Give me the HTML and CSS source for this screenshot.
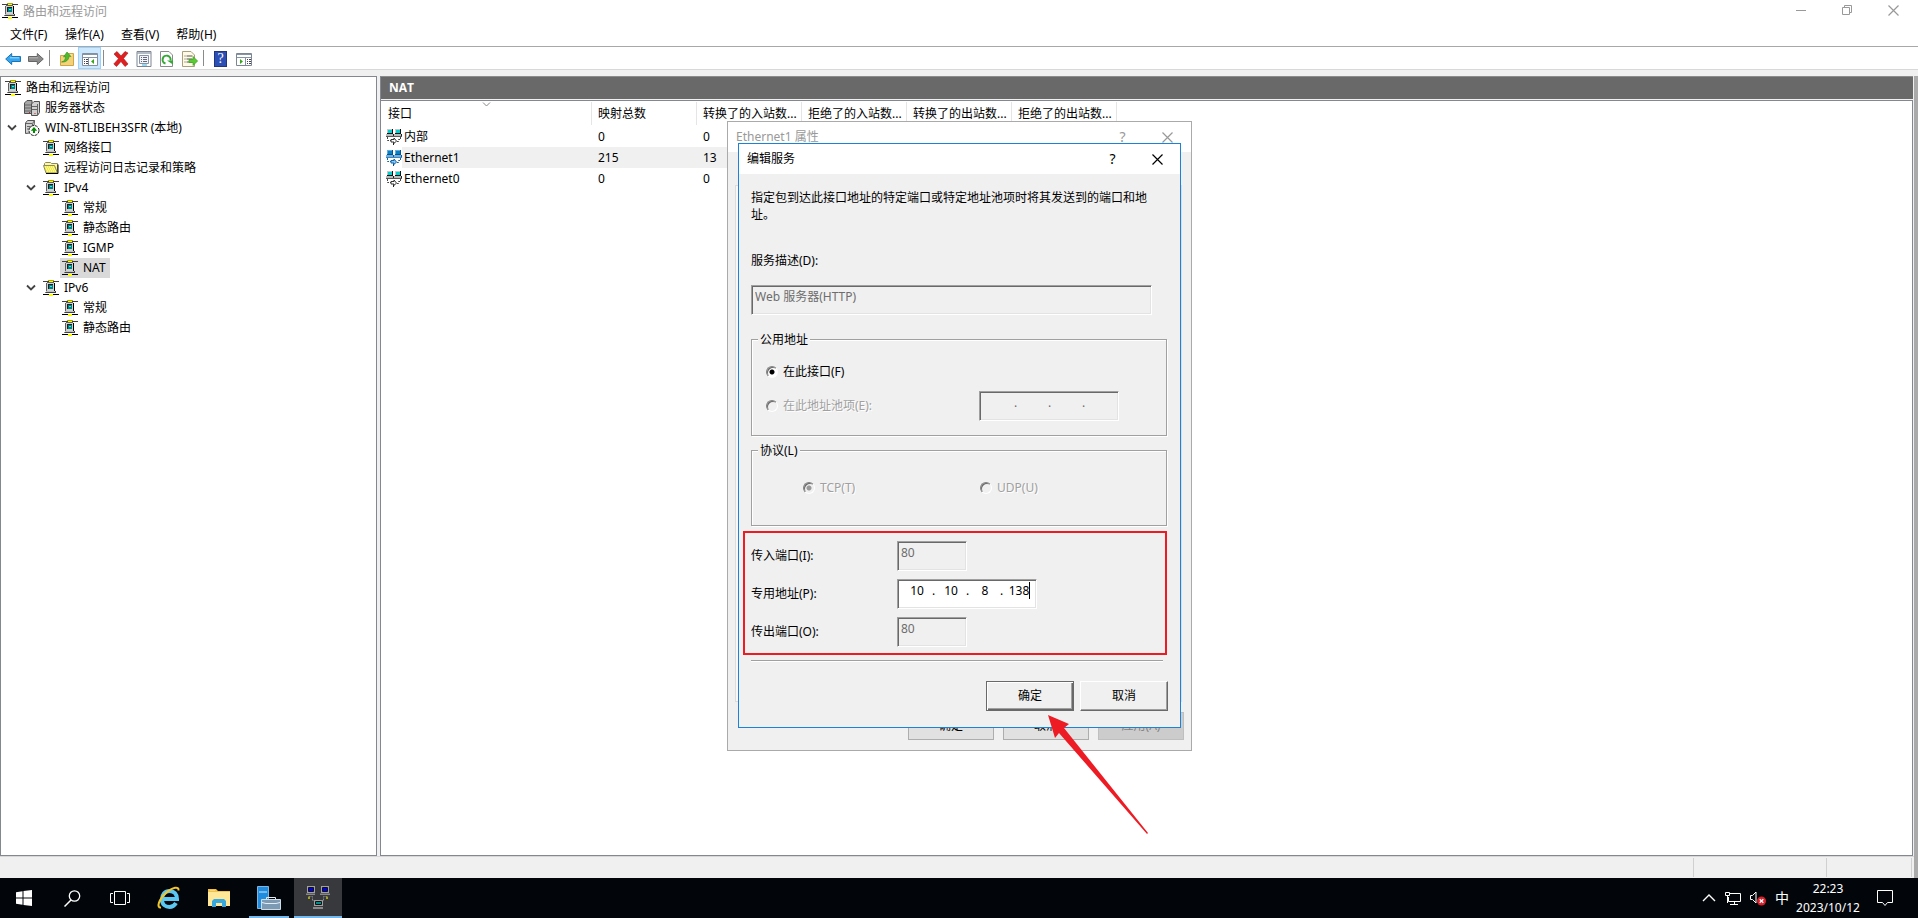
FILE: index.html
```html
<!DOCTYPE html>
<html lang="zh-CN">
<head>
<meta charset="utf-8">
<title>路由和远程访问</title>
<link rel="stylesheet" href="styles.css">
</head>
<body>
<svg class="defs" aria-hidden="true">
  <symbol id="i-rras" viewBox="0 0 16 16">
    <g shape-rendering="crispEdges">
      <path fill="#404040" d="M0 1h16v1H0z"/><path fill="#000" d="M0 14h6v1H0zM10 14h6v1h-6z"/>
      <path fill="#a8a800" d="M5 0h6v1H5z"/><path fill="#ffff00" d="M6 1h4v1H6zM6 14h4v2H6z"/>
      <path fill="#606060" d="M4 2h7v1H4zM3 3h1v8H3z"/>
      <path fill="#d0d0d0" d="M4 3h7v8H4z"/>
      <path fill="#000" d="M11 3h1v8h-1z"/><path fill="#202020" d="M5 4h5v5H5z"/><path fill="#008080" d="M6 5h4v4H6z"/><path fill="#00ffff" d="M7 6h2v1H7z"/>
      <path fill="#404040" d="M3 11h10v2H3z"/><path fill="#c0c0c0" d="M3 11h9v1H3z"/><path fill="#808080" d="M2 12h1v1H2z"/>
    </g>
  </symbol>
  <symbol id="i-servers" viewBox="0 0 16 16">
    <path fill="#a8a8a8" stroke="#505050" d="M.5 3 3 .5h5v13H.5z"/><path fill="#d0d0d0" stroke="#505050" d="M7.500 4 10 1.500h5.500v11l-2 3h-6z"/>
    <path stroke="#666" d="M1 5h6M1 8h6M1 11h6M8 6.500h6M8 9.500h6M13.500 4v11"/><path fill="#c22" d="M5 12h1v1H5zM10.500 13h1v1h-1z"/>
  </symbol>
  <symbol id="i-server" viewBox="0 0 16 16">
    <path fill="#d2d2d2" stroke="#555" d="M1.500 3 3.500.5h7l-1 12-8 1z"/><path stroke="#666" fill="none" d="M2 3.500h6.500l2-3M8.500 4v4M3 6.500h4M3 9h3"/>
    <circle cx="10" cy="10.500" r="5" fill="#fff" stroke="#222" stroke-dasharray="3 1"/><path fill="#008a00" d="M10 7l3.200 3.700H11V13H9v-2.300H6.800z"/>
  </symbol>
  <symbol id="i-folder" viewBox="0 0 16 16">
    <path fill="#fff79a" stroke="#8a8a60" d="M1.500 5V3.500l1-1h5l1 1h6V12"/><path fill="#f4ec3c" stroke="#8a8a60" d="M.5 5.500h11l3 7.500H3z"/><path stroke="#fff" stroke-dasharray="1 1" d="M2 7h9M3 9h9M4 11h9"/><path fill="none" stroke="#000" d="M3 13.500h12V4.500"/>
  </symbol>
  <symbol id="i-nic" viewBox="0 0 16 16">
    <path fill="#111" d="M1 0h6v5H1zM9 0h6v5H9z"/><path fill="#c8c8c8" d="M1 0h5v4H1zM9 0h5v4H9z"/><path fill="#00d0d0" d="M2 1h4v3H2zM10 1h4v3h-4z"/>
    <path fill="#bbb" d="M0 5h7v2H0zM8 5h7v2H8z"/><path fill="#222" d="M0 7h8v.8H0zM8 7h8v.8H8zM7 5h1v2H7zM15 5h1v2h-1z"/>
    <path fill="none" stroke="#444" stroke-dasharray="2 1" d="M1.500 8v3.500h4M14.500 8v2.500h-2v2h-2"/><path fill="#fff" stroke="#333" d="M5 10.500h3V9l2.500 3L8 14.500V13H5z"/><path stroke="#222" d="M7.500 13.500V16"/>
  </symbol>
  <symbol id="i-nic-sel" viewBox="0 0 16 16">
    <path fill="#0c4f88" d="M1 0h6v5H1zM9 0h6v5H9z"/><path fill="#5eaee3" d="M1 0h5v4H1zM9 0h5v4H9z"/><path fill="#0b7fc0" d="M2 1h4v3H2zM10 1h4v3h-4z"/>
    <path fill="#67b2e6" d="M0 5h7v2H0zM8 5h7v2H8z"/><path fill="#0c5b9c" d="M0 7h8v.8H0zM8 7h8v.8H8zM7 5h1v2H7zM15 5h1v2h-1z"/>
    <path fill="none" stroke="#0d66aa" stroke-dasharray="2 1" d="M1.500 8v3.500h4M14.500 8v2.500h-2v2h-2"/><path fill="#8cc8f2" stroke="#0d66aa" d="M5 10.500h3V9l2.500 3L8 14.500V13H5z"/><path stroke="#0b4d86" d="M7.500 13.500V16"/>
  </symbol>
  <symbol id="i-chev" viewBox="0 0 10 8"><path fill="none" stroke="#444" stroke-width="1.800" d="M1 1.500l4 4 4-4"/></symbol>
  <symbol id="i-x" viewBox="0 0 11 11"><path fill="none" stroke="currentColor" stroke-width="1.200" d="M.5.5l10 10M10.500.5l-10 10"/></symbol>
</svg>

<main class="window">
  <header class="titlebar">
    <svg class="ico"><use href="#i-rras"/></svg>
    <span class="title">路由和远程访问</span>
    <button class="cap" aria-label="最小化"><svg width="11" height="11"><path stroke="#999" d="M0 5.500h10"/></svg></button>
    <button class="cap" aria-label="还原"><svg width="11" height="11"><path fill="none" stroke="#999" d="M.5 2.500h7v7h-7zM2.500 2.500v-2h7v7h-2"/></svg></button>
    <button class="cap" aria-label="关闭"><svg width="11" height="11"><use href="#i-x"/></svg></button>
  </header>
  <nav class="menubar"><button>文件(F)</button><button>操作(A)</button><button>查看(V)</button><button>帮助(H)</button></nav>
  <div class="toolbar">
    <button aria-label="后退"><svg class="ico"><path fill="#37a6ee" stroke="#1c73b8" d="M.7 8l6-5.500v3h8.800v5H6.700v3z"/><path stroke="#9fdcff" d="M5 6.800h9"/></svg></button>
    <button aria-label="前进"><svg class="ico"><path fill="#8b8b8b" stroke="#666" d="M15.300 8l-6-5.500v3H.5v5h8.800v3z"/><path stroke="#b5b5b5" d="M1 6.800h9"/></svg></button>
    <i class="sep"></i>
    <button aria-label="上一级"><svg class="ico"><path fill="#f3d27a" stroke="#cfa545" d="M1.500 4.500h7l1-2h5v12h-13z"/><path fill="#fff3c4" d="M10 3.500h3v1h-3z"/><path fill="#4fba2c" stroke="#2f8f1b" stroke-width=".6" d="M2.500 11c3-.5 4-3 4-5.500L4.500 6 8 1l4 4.500-2-.3c0 3.500-3 6.300-7.500 5.800z"/></svg></button>
    <button class="on" aria-label="显示树"><svg class="ico"><path fill="#fff" stroke="#8390a0" d="M.5 2.500h15v12H.5z"/><path fill="#8794a6" d="M1 3h14v1H1zM1 6h14v1H1z"/><path stroke="#8390a0" d="M6.500 7v7"/><path stroke="#445" stroke-dasharray="1 1 2" d="M2 8.500h4M2 10.500h4M2 12.500h4"/><path fill="#36a818" d="M12 8v5l-3-2.500z"/></svg></button>
    <i class="sep"></i>
    <button aria-label="删除"><svg class="ico"><path fill="#e02020" stroke="#a81414" stroke-width=".6" d="M1 3l3-2.500L8 5l4-4.500L15 2l-4.500 5.500L15 13l-3 2.500L8 10.500l-4.500 5L.8 13 5.500 7.700z"/></svg></button>
    <button aria-label="属性"><svg class="ico"><path fill="#fff" stroke="#7c8591" d="M1 .5h14v15H1z"/><path stroke="#9aa4b0" stroke-width="1.500" d="M1 2h14"/><path fill="#f2f5f8" stroke="#8593a4" d="M3.500 4.500h9v8h-9z"/><path stroke="#667" stroke-dasharray="1 1 4" d="M5 6.500h6M5 8.500h6M5 10.500h6"/><path fill="#36aee0" d="M6 13.500h5v1H6z"/></svg></button>
    <button aria-label="刷新"><svg class="ico"><path fill="#fff" stroke="#8b8b8b" d="M1.500.5H10L13.500 4v11.500h-12z"/><path fill="none" stroke="#35a835" stroke-width="2" d="M6.500 12.500a4 4 0 1 1 5-3"/><path fill="#35a835" d="M8 9.500h6v4z"/></svg></button>
    <button aria-label="导出列表"><svg class="ico"><path fill="#fffbe6" stroke="#a8a07a" d="M.5.5H9L12.500 4v11.500H.5z"/><path stroke="#555" stroke-dasharray="1 1 6" d="M2.500 5h8M2.500 8h8M2.500 11h8"/><path fill="#5bcb33" stroke="#37971b" stroke-width=".6" d="M7 8.500h4v-3L15.700 10 11 14.500v-3H7z"/></svg></button>
    <i class="sep"></i>
    <button aria-label="帮助"><span class="help">?</span></button>
    <button aria-label="操作窗格"><svg class="ico"><path fill="#fff" stroke="#7d8794" d="M.5 2.500h15v12H.5z"/><path fill="#8794a6" d="M1 3h14v1H1zM1 6h14v1H1z"/><path stroke="#8390a0" d="M9.500 7v7"/><path stroke="#445" stroke-dasharray="1 1 2" d="M11 8.500h4M11 10.500h4M11 12.500h4"/><path fill="#36a818" d="M4 8v5l3-2.500z"/></svg></button>
  </div>

  <div class="body">
    <div class="work">
      <div class="panes">
        <ul class="tree">
          <li class="l0"><svg class="ico"><use href="#i-rras"/></svg><span>路由和远程访问</span></li>
          <li class="l1"><svg class="ico"><use href="#i-servers"/></svg><span>服务器状态</span></li>
          <li class="l1 open"><svg class="chev"><use href="#i-chev"/></svg><svg class="ico"><use href="#i-server"/></svg><span>WIN-8TLIBEH3SFR (本地)</span></li>
          <li class="l2"><svg class="ico"><use href="#i-rras"/></svg><span>网络接口</span></li>
          <li class="l2"><svg class="ico"><use href="#i-folder"/></svg><span>远程访问日志记录和策略</span></li>
          <li class="l2 open"><svg class="chev"><use href="#i-chev"/></svg><svg class="ico"><use href="#i-rras"/></svg><span>IPv4</span></li>
          <li class="l3"><svg class="ico"><use href="#i-rras"/></svg><span>常规</span></li>
          <li class="l3"><svg class="ico"><use href="#i-rras"/></svg><span>静态路由</span></li>
          <li class="l3"><svg class="ico"><use href="#i-rras"/></svg><span>IGMP</span></li>
          <li class="l3 sel"><svg class="ico"><use href="#i-rras"/></svg><span>NAT</span></li>
          <li class="l2 open"><svg class="chev"><use href="#i-chev"/></svg><svg class="ico"><use href="#i-rras"/></svg><span>IPv6</span></li>
          <li class="l3"><svg class="ico"><use href="#i-rras"/></svg><span>常规</span></li>
          <li class="l3"><svg class="ico"><use href="#i-rras"/></svg><span>静态路由</span></li>
        </ul>
        <section class="detail">
          <h1>NAT</h1>
          <div class="list">
            <table>
              <colgroup><col class="c-name"><col class="c"><col class="c"><col class="c"><col class="c"><col class="c"><col></colgroup>
              <thead><tr><th>接口<svg class="sort" width="9" height="5"><path fill="none" stroke="#888" d="M1 .5l3.500 3.500L8 .5"/></svg></th><th>映射总数</th><th>转换了的入站数...</th><th>拒绝了的入站数...</th><th>转换了的出站数...</th><th>拒绝了的出站数...</th><th class="end"></th></tr></thead>
              <tbody>
                <tr><td><span class="name"><svg class="ico"><use href="#i-nic"/></svg>内部</span></td><td>0</td><td>0</td><td></td><td></td><td></td><td class="end"></td></tr>
                <tr class="sel"><td><span class="name"><svg class="ico"><use href="#i-nic-sel"/></svg>Ethernet1</span></td><td>215</td><td>13</td><td></td><td></td><td></td><td class="end"></td></tr>
                <tr><td><span class="name"><svg class="ico"><use href="#i-nic"/></svg>Ethernet0</span></td><td>0</td><td>0</td><td></td><td></td><td></td><td class="end"></td></tr>
              </tbody>
            </table>
          </div>
        </section>
      </div>
      <footer class="status"><span></span><span></span><span></span></footer>
    </div>
    <div class="edge"></div>
  </div>

  <section class="dlg props" aria-label="Ethernet1 属性">
    <header><span>Ethernet1 属性</span><button aria-label="帮助">?</button><button aria-label="关闭"><svg width="11" height="11"><use href="#i-x"/></svg></button></header>
    <div class="tabpage"></div>
    <div class="pbtns"><button>确定</button><button>取消</button><button disabled>应用(A)</button></div>
  </section>

  <form class="dlg edit" aria-label="编辑服务">
    <header><span>编辑服务</span><button type="button" aria-label="帮助">?</button><button type="button" aria-label="关闭"><svg width="11" height="11"><use href="#i-x"/></svg></button></header>
    <div class="content">
      <p>指定包到达此接口地址的特定端口或特定地址池项时将其发送到的端口和地址。</p>
      <label class="desc-label" for="desc">服务描述(D):</label>
      <input id="desc" class="box desc" value="Web 服务器(HTTP)" disabled>
      <fieldset class="addr">
        <legend>公用地址</legend>
        <div class="row"><input type="radio" name="addr" id="r1" checked><label for="r1">在此接口(F)</label></div>
        <div class="row dis"><input type="radio" name="addr" id="r2" disabled><label for="r2">在此地址池项(E):</label>
          <div class="box ip off"><input aria-label="地址 1" disabled><i>.</i><input aria-label="地址 2" disabled><i>.</i><input aria-label="地址 3" disabled><i>.</i><input aria-label="地址 4" disabled></div></div>
      </fieldset>
      <fieldset class="proto">
        <legend>协议(L)</legend>
        <div class="row dis"><input type="radio" name="proto" id="r3" checked disabled><label for="r3">TCP(T)</label></div>
        <div class="row dis"><input type="radio" name="proto" id="r4" disabled><label for="r4">UDP(U)</label></div>
      </fieldset>
      <div class="ports">
        <label for="inp">传入端口(I):</label><input id="inp" class="box port" value="80" disabled>
        <label for="ip1">专用地址(P):</label>
        <div class="box ip"><input id="ip1" value="10"><i>.</i><input aria-label="第 2 段" value="10"><i>.</i><input aria-label="第 3 段" value="8"><i>.</i><input aria-label="第 4 段" value="138"><b class="caret"></b></div>
        <label for="outp">传出端口(O):</label><input id="outp" class="box port" value="80" disabled>
      </div>
      <hr>
      <div class="btns"><button type="button" class="ok">确定</button><button type="button">取消</button></div>
    </div>
  </form>
  <svg class="arrow" viewBox="0 0 102 121"><path fill="#ed1c24" d="M1 1l21 9-5 4 84 105-1 1L12 19l-4 5z"/></svg>
</main>

<nav class="taskbar">
  <button aria-label="开始"><svg width="16" height="16"><path fill="#fff" d="M0 2.200L6.500 1.300V7.500H0zM7.500 1.100L16 0v7.500H7.500zM0 8.500h6.500v6.200L0 13.800zM7.500 8.500H16V16l-8.500-1.100z"/></svg></button>
  <button aria-label="搜索"><svg width="17" height="17"><circle cx="10.500" cy="6" r="5.200" fill="none" stroke="#fff" stroke-width="1.300"/><path stroke="#fff" stroke-width="1.500" d="M7 10L.5 16.500"/></svg></button>
  <button aria-label="任务视图"><svg width="20" height="16"><path fill="none" stroke="#fff" d="M4.500 1.500h11v13h-11zM3 3.500H.5v9H3M17 3.500h2.500v9H17"/></svg></button>
  <button class="wide" aria-label="Internet Explorer"><svg width="24" height="24"><path fill="none" stroke="#5cc8f2" stroke-width="4" d="M6 13h14c0-5-3-8-7.500-8S5 8.500 5 13.500s3.500 7.500 7.500 7.500c3 0 5-1.500 6.500-4"/><path fill="none" stroke="#f3c62b" stroke-width="2" d="M4 21.500C-1 22 2 13 9 7s13-7 12.500-2.500"/></svg></button>
  <button class="wide" aria-label="文件资源管理器"><svg width="22" height="18"><path fill="#f1c247" d="M0 0h8l2 2h12v15H0z"/><path fill="#ffe797" d="M0 3h22v14H0z"/><path fill="#f8d775" d="M2 1h5v1H2z"/><path fill="#35a8e0" d="M4 18v-6l2-2h10l2 2v6h-4v-4H8v4z"/></svg></button>
  <button class="run" aria-label="服务器管理器"><svg width="24" height="24"><path fill="#1f8ce0" stroke="#9bd2fa" stroke-width=".8" d="M.5.500h11v22H.5z"/><path stroke="#cfe9ff" d="M2 6h8"/><path fill="#7d9ab5" stroke="#cfdce7" d="M4.500 13.500h19v10h-19z"/><path fill="none" stroke="#e5edf4" d="M9.500 13v-1.500h9V13M5 16.500l4 1h10l4-1"/></svg></button>
  <button class="run active" aria-label="路由和远程访问"><svg width="24" height="24"><path fill="#a0a0a0" d="M1 0h8v7H1zM15 0h8v7h-8zM8 14h9v6H8z"/><path fill="#0000e0" stroke="#111" d="M2.500 1.500h5v4h-5zM16.500 1.500h5v4h-5z"/><path fill="#008b8b" stroke="#111" d="M9.500 15.500h6v3h-6z"/><path fill="#888" d="M0 7.500h9V9H0zM14 7.500h10V9H14zM7 21h10v2H7z"/><path fill="none" stroke="#888" stroke-dasharray="2 1" d="M2.500 10.500h4v4h2M21.500 10.500h-4v4h-2"/><path fill="#a8a800" d="M2 11h2v2H2zM20 11h2v2h-2z"/></svg></button>
  <div class="tray">
    <svg width="14" height="16"><path fill="none" stroke="#fff" stroke-width="1.400" d="M1 11l6-6 6 6"/></svg>
    <svg width="16" height="16"><path fill="none" stroke="#fff" d="M5 3.500h10.500v8H3.500V7M9.500 12v2.500M5 14.500h8M.5 2.500h4v3h-4zM2.500 6v7"/></svg>
    <svg width="16" height="16"><path fill="none" stroke="#fff" d="M.5 5.500h2l3.500-3.500v11L2.500 9.500h-2z"/><circle cx="11.500" cy="11" r="4.500" fill="#d8202c"/><path stroke="#fff" stroke-width="1.300" d="M9.700 9.200l3.600 3.600M13.300 9.200l-3.600 3.600"/></svg>
    <span class="ime">中</span>
    <div class="clock"><span>22:23</span><span>2023/10/12</span></div>
    <svg class="note" width="16" height="17"><path fill="none" stroke="#fff" d="M.5.500h15v12h-5l-2.500 3-2.500-3h-5z"/></svg>
  </div>
</nav>
</body>
</html>
```
FILE: styles.css
```css
* { box-sizing: border-box; }
html, body { height: 100%; margin: 0; }
body {
  display: flex; flex-direction: column; overflow: hidden;
  font: 12px/16px "Noto Sans", "Noto Sans CJK SC", sans-serif; color: #000; background: #fff;
}
button, input { font: inherit; color: inherit; margin: 0; padding: 0; border: 0; background: none; }
svg { display: block; flex: none; }
.defs { position: absolute; width: 0; height: 0; }
.ico { width: 16px; height: 16px; }

.window { flex: 1; min-height: 0; position: relative; display: flex; flex-direction: column; }
.titlebar { height: 23px; display: flex; align-items: flex-start; padding: 0 2px; color: #999; }
.titlebar .ico { margin-top: 3px; }
.titlebar .title { flex: 1; padding: 4px 0 0 5px; }
.cap { width: 46px; height: 20px; display: grid; place-items: center; color: #999; }

.menubar { height: 24px; display: flex; gap: 17px; padding: 1px 10px 0; border-bottom: 1px solid #a8a8a8; }
.menubar button { min-width: 38px; text-align: left; }
.toolbar { height: 23px; display: flex; padding-left: 1px; border-bottom: 1px solid #d8d8d8; }
.toolbar button { width: 23px; display: grid; place-items: center; padding-top: 1px; }
.toolbar .on { background: #cce8ff; box-shadow: inset 0 0 0 1px #99d1ff; }
.sep { width: 8px; display: flex; padding: 3px 2px; }
.sep::before { content: ""; width: 1px; background: #8a8a8a; }
.help { width: 13px; height: 16px; background: #2c4fb5; border: 1px solid #20357c; color: #fff; font: 14px/14px "Liberation Serif", serif; }

.body { flex: 1; min-height: 0; display: flex; padding-top: 6px; background: #f0f0f0; }
.work { flex: 1; display: flex; flex-direction: column; min-width: 0; }
.edge { width: 4px; background: #aaa; }
.panes { flex: 1; min-height: 0; display: flex; gap: 3px; padding-right: 1px; }
.tree { width: 377px; margin: 0; padding: 1px 0; list-style: none; background: #fff; border: 1px solid #828790; }
.tree li { height: 20px; display: flex; align-items: center; }
.tree span { padding-left: 5px; }
.l0 { padding-left: 4px; }
.l1 { padding-left: 23px; }
.l2 { padding-left: 42px; }
.l3 { padding-left: 61px; }
.l1.open { padding-left: 6px; }
.l2.open { padding-left: 25px; }
.chev { width: 10px; height: 8px; margin-right: 7px; }
.tree .sel { width: fit-content; margin-left: 59px; padding: 0 4px 0 2px; background: #d9d9d9; }

.detail { flex: 1; min-width: 0; display: flex; flex-direction: column; border-left: 1px solid #828790; }
h1 { margin: 0; height: 23px; padding: 0 8px; font: bold 12px/22px "Open Sans", sans-serif; color: #fff; background: #696969; border-top: 1px solid #8c8c8c; }
.list { flex: 1; margin-top: 1px; background: #fff; border: solid #828790; border-width: 1px 1px 1px 0; }
table { width: 100%; table-layout: fixed; border-collapse: separate; border-spacing: 0; }
.c-name { width: 211px; }
.c { width: 105px; }
th, td { height: 21px; padding: 0; text-align: left; font-weight: normal; white-space: nowrap; }
td:not(:first-child), th:not(:first-child) { padding-left: 6px; }
th { height: 25px; padding: 0 0 0 7px; position: relative; background: linear-gradient(#e5e5e5, #e5e5e5) 100% 1px / 1px 23px no-repeat; }
th.end { background: none; }
.sort { position: absolute; top: 1px; left: 101px; }
.name { display: flex; align-items: center; gap: 2px; padding-left: 5px; }
.list .sel td { background: #f0f0f0; }
.list .sel td:first-child { background: linear-gradient(90deg, #fff 21px, #f0f0f0 21px); }
.list .sel .end { background: none; }
.status { height: 22px; display: flex; justify-content: flex-end; border-top: 1px solid #d7d7d7; padding: 1px 2px 1px 0; }
.status span { border-right: 1px solid #d0d0d0; width: 133px; }
.status span:last-child { width: 85px; }

.dlg { position: absolute; background: #f0f0f0; display: flex; flex-direction: column; }
.dlg header { display: flex; align-items: center; background: #fff; height: 30px; }
.dlg header span { flex: 1; }
.dlg header button { width: 45px; height: 28px; display: grid; place-items: center; font-size: 14px; }
.props { left: 727px; top: 121px; width: 465px; height: 630px; border: 1px solid #aaa; padding: 0 7px 10px; }
.props header { margin: 0 -7px; padding: 0 1px 0 8px; color: #999; }
.tabpage { flex: 1; margin: 33px 2px 10px 0; border: 1px solid #dcdcdc; background: #f8f8f8; }
.pbtns { display: flex; justify-content: flex-end; gap: 9px; }
.pbtns button { width: 86px; height: 28px; border: 1px solid #adadad; background: #e1e1e1; }
.pbtns button:disabled { background: #ccc; border-color: #bfbfbf; color: #838383; }

.edit { left: 738px; top: 143px; width: 443px; height: 585px; border: 1px solid #1883d7; }
.edit header { padding-left: 8px; }
.content { padding: 15px 12px 0; flex: 1; display: flex; flex-direction: column; }
.content p { margin: 0 0 30px; line-height: 17px; padding-right: 20px; }
.desc-label { height: 16px; }
.box { border: 1px solid; border-color: #a0a0a0 #fff #fff #a0a0a0; box-shadow: inset 1px 1px #696969, inset -1px -1px #e3e3e3; height: 30px; }
input.box { color: #6d6d6d; padding: 0 3px 8px; }
.desc { width: 401px; margin-top: 16px; }
fieldset { margin: 0; padding: 0; min-width: 0; width: 416px; border: 1px solid #a0a0a0; box-shadow: 1px 1px #fff, inset 1px 1px #fff; position: relative; }
legend { position: absolute; top: -8px; left: 6px; padding: 0 2px; background: #f0f0f0; }
.addr { height: 97px; margin-top: 24px; padding: 16px 0 0 14px; }
.row { display: flex; align-items: center; gap: 5px; height: 32px; }
.addr .row + .row { height: 36px; }
.row.dis { color: #a0a0a0; text-shadow: 1px 1px #fff; }
.row input[type=radio] { appearance: none; width: 12px; height: 12px; border-radius: 50%; border: 1px solid; border-color: #808080 #fff #fff #808080; background: #fff; box-shadow: inset 1px 1px #696969; }
.row input[type=radio]:disabled { background: #f0f0f0; }
.row input[type=radio]:checked { background: radial-gradient(circle at 5px 5px, #000 2px, #fff 3px); }
.row input[type=radio]:checked:disabled { background: radial-gradient(circle at 5px 5px, #999 2px, #f0f0f0 3px); }
.proto { height: 76px; margin-top: 14px; display: grid; grid-template-columns: 177px 1fr; padding: 21px 0 0 51px; }
.ip { width: 140px; display: flex; padding: 3px 2px 0 4px; background: #fff; position: relative; line-height: 16px; }
.ip input { width: 30px; height: 16px; text-align: center; }
.ip i { width: 4px; font-style: normal; text-shadow: none; color: #000; }
.ip.off { background: #f0f0f0; margin-left: auto; margin-right: 47px; }
.ip.off i { color: #6d6d6d; }
.caret { position: absolute; left: 131px; top: 2px; width: 1px; height: 17px; background: #000; }
.ports { margin: 5px 0 0 -8px; width: 424px; height: 124px; border: 2px solid #ed1c24; padding: 8px 0 0 6px; display: grid; grid-template-columns: 146px 1fr; grid-auto-rows: 30px; row-gap: 8px; align-items: center; }
.port { width: 70px; }
hr { width: 412px; margin: 5px 0 0; border: 0; border-top: 1px solid #a0a0a0; border-bottom: 1px solid #fff; }
.btns { display: flex; gap: 6px; margin: 19px 0 0 235px; }
.btns button { width: 88px; height: 30px; border: 1px solid; border-color: #fff #696969 #696969 #fff; box-shadow: inset -1px -1px #a0a0a0; }
.btns .ok { border: 1px solid #696969; box-shadow: inset 1px 1px #fff, inset -1px -1px #696969, inset -2px -2px #a0a0a0; }
.arrow { position: absolute; left: 1047px; top: 714px; width: 102px; height: 121px; }

.taskbar { flex: none; height: 40px; display: flex; background: #02060b; color: #fff; }
.taskbar button { width: 48px; display: grid; place-items: center; }
.taskbar .wide { width: 50px; }
.taskbar .run { box-shadow: inset 0 -2px #76b9ed; margin: 0 5px; width: 40px; }
.taskbar .active { width: 48px; margin: 0; background: #37393d; }
.tray { margin-left: auto; display: flex; align-items: center; padding-right: 25px; }
.tray svg { margin-right: 9px; }
.ime { font-size: 14px; width: 14px; margin-right: 5px; }
.clock { width: 68px; display: flex; flex-direction: column; align-items: center; line-height: 19px; }
.tray .note { margin: 0 0 0 15px; }
```
